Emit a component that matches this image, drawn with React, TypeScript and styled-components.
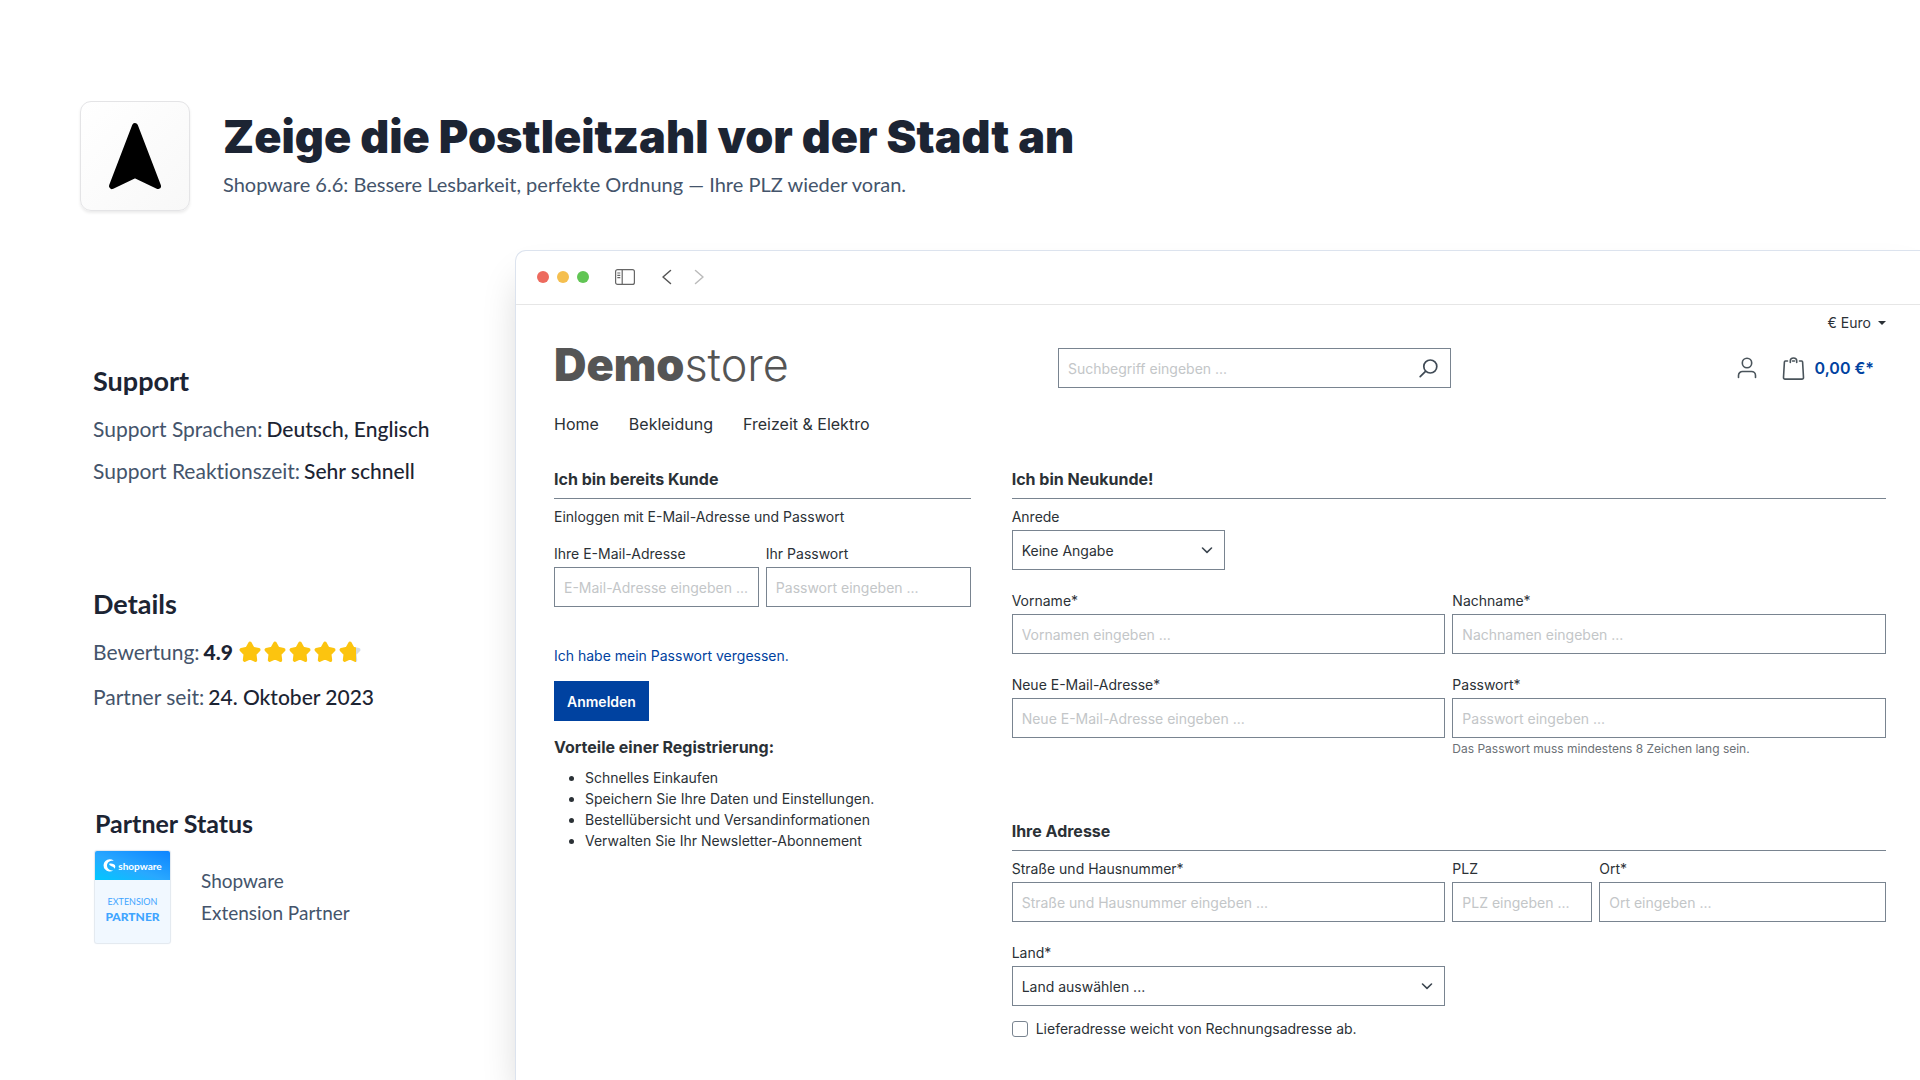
import React, { useId } from "react";
import styled, { createGlobalStyle } from "styled-components";

const ink = "#1c2433";
const slate = "#44546b";
const text = "#2b3136";
const line = "#798490";
const primary = "#0042a0";
const brandFont = `Lato, "Open Sans", sans-serif`;
const shopFont = `Inter, "Liberation Sans", sans-serif`;

const GlobalStyle = createGlobalStyle`
  *, *::before, *::after { box-sizing: border-box; }
  body { margin: 0; background: #fff; color: ${text}; font-family: ${shopFont}; }
  h1, h2, h3, p, ul, dl, dd { margin: 0; padding: 0; }
  button, input, select { font: inherit; color: inherit; }
  svg { display: block; }
`;

const Page = styled.div`
  display: flex;
  flex-direction: column;
  min-height: 100vh;
  overflow: hidden;
`;

const Hero = styled.header`
  display: flex;
  align-items: center;
  gap: 33px;
  padding: 101px 80px 39px;
`;

const AppIcon = styled.div`
  display: grid;
  place-items: center;
  flex: none;
  width: 110px;
  height: 110px;
  border: 1px solid #e4e4e6;
  border-radius: 11px;
  background: linear-gradient(135deg, #fff, #f8f8f8);
  box-shadow: 0 2px 3px rgba(0, 0, 0, 0.08);
`;

const HeroText = styled.div`
  display: grid;
  gap: 4px;
  padding-bottom: 4px;
`;

const Title = styled.h1`
  color: ${ink};
  font: 900 45px/56px ${shopFont};
`;

const Subtitle = styled.p`
  color: ${slate};
  font: 400 20px/30px ${brandFont};
`;

const Main = styled.main`
  display: flex;
  flex: 1;
`;

const Sidebar = styled.aside`
  flex: none;
  width: 515px;
  padding: 113px 24px 0 93px;
  font-family: ${brandFont};
  font-variant-ligatures: none;
  color: ${slate};
`;

const SideSection = styled.section<{ $space: number }>`
  margin-bottom: ${(p) => p.$space}px;
`;

const SideTitle = styled.h2`
  color: ${ink};
  font-size: 27px;
  line-height: 36px;
  font-weight: 700;
`;

const Facts = styled.dl<{ $gap: number }>`
  display: grid;
  gap: ${(p) => p.$gap}px;
  margin-top: 15px;
  font-size: 21px;
  line-height: 30px;
`;

const Fact = styled.div`
  display: flex;
  align-items: center;
  gap: 4px;
`;

const FactValue = styled.dd`
  display: flex;
  align-items: center;
  gap: 5px;
  color: ${ink};
  font-weight: 500;
`;

const Score = styled.strong`
  font-weight: 900;
`;

const Stars = styled.span`
  display: flex;
  gap: 1px;
`;

const PartnerTitle = styled(SideTitle)`
  font-size: 25px;
`;

const PartnerSection = styled.section`
  padding-left: 2px;
`;

const PartnerRow = styled.div`
  display: flex;
  align-items: center;
  gap: 31px;
  margin-top: 10px;
  font-size: 19px;
  line-height: 32px;
`;

const Badge = styled.div`
  flex: none;
  width: 75px;
  height: 92px;
  border-radius: 2px;
  overflow: hidden;
  background: #f1f8ff;
  box-shadow: 0 0 1px 1px #e2e8ef;
  color: #3fa5ff;
  text-align: center;
`;

const BadgeTop = styled.div`
  display: flex;
  align-items: center;
  justify-content: center;
  gap: 2px;
  height: 29px;
  background: linear-gradient(20deg, #00c8ff 0%, #29a8ff 45%, #0d84ff 100%);
  color: #fff;
  font-size: 10px;
  line-height: 12px;
  font-weight: 700;
`;

const BadgeKind = styled.div`
  margin-top: 15px;
  font-size: 9px;
  line-height: 14px;
`;

const BadgeRole = styled.div`
  font-size: 12px;
  line-height: 15px;
  font-weight: 900;
`;

const BrowserWindow = styled.section`
  flex: 1;
  min-width: 0;
  border: solid #dce3ee;
  border-width: 1px 0 0 1px;
  border-radius: 11px 0 0 0;
  background: #fff;
  box-shadow: 0 24px 40px -8px rgba(0, 0, 0, 0.2);
`;

const Toolbar = styled.div`
  display: flex;
  align-items: center;
  height: 54px;
  padding: 0 0 2px 21px;
  border-bottom: 1px solid #e6e6e6;
`;

const Lights = styled.div`
  display: flex;
  gap: 8px;
  margin-right: 26px;
`;

const Light = styled.span<{ $color: string }>`
  width: 12px;
  height: 12px;
  border-radius: 50%;
  background: ${(p) => p.$color};
`;

const IconButton = styled.button`
  display: grid;
  place-items: center;
  padding: 0;
  border: 0;
  background: none;
`;

const ToolbarArrows = styled.div`
  display: flex;
  gap: 13px;
  margin-left: 21px;
`;

const Store = styled.div`
  padding: 7px 34px 40px 38px;
  font-size: 14px;
  line-height: 21px;
`;

const TopBar = styled.div`
  display: flex;
  justify-content: flex-end;
`;

const Currency = styled.button`
  display: flex;
  align-items: center;
  gap: 7px;
  padding: 0;
  border: 0;
  background: none;
  line-height: 21px;
`;

const StoreHeader = styled.div`
  display: grid;
  grid-template-columns: 504fr 393fr 435fr;
  align-items: center;
  margin-top: 15px;
`;

const Logo = styled.a`
  height: 40px;
  color: #555;
  font-size: 45px;
  line-height: 34px;
  font-weight: 300;
  text-decoration: none;
`;

const LogoStrong = styled.span`
  font-weight: 900;
`;

const Search = styled.form`
  display: flex;
  height: 40px;
  padding-right: 12px;
  border: 1px solid ${line};
`;

const SearchInput = styled.input`
  flex: 1;
  min-width: 0;
  padding: 0 9px;
  border: 0;
  outline: 0;
  background: none;
  &::placeholder { color: #c3c6c8; opacity: 1; }
`;

const Actions = styled.div`
  display: flex;
  align-items: center;
  justify-content: flex-end;
  padding-right: 12px;
`;

const Cart = styled.a`
  display: flex;
  align-items: center;
  gap: 10px;
  margin-left: 25px;
  color: ${primary};
  font-size: 16px;
  font-weight: 600;
  text-decoration: none;
`;

const Nav = styled.nav`
  display: flex;
  gap: 30px;
  margin-top: 24px;
  font-size: 16px;
  line-height: 24px;
`;

const NavLink = styled.a`
  color: inherit;
  text-decoration: none;
`;

const Columns = styled.div`
  display: grid;
  grid-template-columns: repeat(12, minmax(0, 1fr));
  column-gap: 41px;
  margin-top: 31px;
`;

const Column = styled.form<{ $span: number }>`
  grid-column: span ${(p) => p.$span};
`;

const CardTitle = styled.h2`
  margin-bottom: 7px;
  padding-bottom: 7px;
  border-bottom: 1px solid ${line};
  font-size: 16px;
  line-height: 24px;
  font-weight: 700;
`;

const Fields = styled.div<{ $top?: number }>`
  display: grid;
  grid-template-columns: repeat(12, minmax(0, 1fr));
  gap: 20px 7px;
  margin-top: ${(p) => p.$top ?? 0}px;
`;

const FieldBox = styled.div<{ $span: number }>`
  grid-column: span ${(p) => p.$span};
`;

const RowBreak = styled.div<{ $span: number }>`
  grid-column: span ${(p) => p.$span};
`;

const Label = styled.label`
  display: block;
  margin-bottom: 3px;
`;

const Input = styled.input`
  display: block;
  width: 100%;
  height: 40px;
  padding: 0 9px;
  border: 1px solid ${line};
  border-radius: 0;
  background: #fff;
  &::placeholder { color: #c3c6c8; opacity: 1; }
`;

const SelectWrap = styled.div`
  position: relative;
  svg {
    position: absolute;
    right: 12px;
    top: 15px;
    pointer-events: none;
  }
`;

const Select = styled.select`
  display: block;
  width: 100%;
  height: 40px;
  padding: 0 9px;
  border: 1px solid ${line};
  border-radius: 0;
  background: #fff;
  appearance: none;
`;

const Hint = styled.small`
  display: block;
  margin-top: 3px;
  color: #6c7176;
  font-size: 12px;
  line-height: 16px;
`;

const ForgotLink = styled.a`
  display: block;
  margin: 38px 0 15px;
  color: ${primary};
  text-decoration: none;
`;

const Submit = styled.button`
  height: 40px;
  padding: 0 12px;
  border: 1px solid ${primary};
  background: ${primary};
  color: #fff;
  font-weight: 600;
`;

const BenefitsTitle = styled.h3`
  margin: 14px 0 8px;
  font-size: 16px;
  line-height: 24px;
  font-weight: 700;
`;

const Benefits = styled.ul`
  padding-left: 31px;
`;

const AddressBlock = styled.div`
  margin-top: 62px;
`;

const CheckRow = styled.div`
  display: flex;
  align-items: center;
  gap: 8px;
  margin-top: 12px;
`;

const Checkbox = styled.input`
  width: 16px;
  height: 16px;
  margin: 0;
  border: 1px solid ${line};
  border-radius: 3px;
  background: #fff;
  appearance: none;
`;

function Field({ label, placeholder, span, type = "text", hint }: {
  label: string; placeholder: string; span: number; type?: string; hint?: string;
}) {
  const id = useId();
  return (
    <FieldBox $span={span}>
      <Label htmlFor={id}>{label}</Label>
      <Input id={id} type={type} placeholder={placeholder} />
      {hint && <Hint>{hint}</Hint>}
    </FieldBox>
  );
}

function SelectField({ label, value, span }: { label: string; value: string; span: number }) {
  const id = useId();
  return (
    <FieldBox $span={span}>
      <Label htmlFor={id}>{label}</Label>
      <SelectWrap>
        <Select id={id}><option>{value}</option></Select>
        <svg width="12" height="10" viewBox="0 0 12 10" fill="none" stroke="#3c4650" strokeWidth="1.6" strokeLinecap="round" strokeLinejoin="round">
          <path d="M1.5 3 6 7.3 10.5 3" />
        </svg>
      </SelectWrap>
    </FieldBox>
  );
}

const starPoints = "12,3.4 14.9,8.6 20.7,9.8 16.7,14.1 17.4,20.1 12,17.6 6.6,20.1 7.3,14.1 3.3,9.8 9.1,8.6";

function Star({ fill = 1 }: { fill?: number }) {
  const id = useId();
  return (
    <svg width="24" height="24" viewBox="0 0 24 24" aria-hidden="true">
      <defs>
        <linearGradient id={id} gradientUnits="userSpaceOnUse" x1="0" x2="24" y1="0" y2="0">
          <stop offset={fill} stopColor="#fcc40f" />
          <stop offset={fill} stopColor="#d3dbe7" />
        </linearGradient>
      </defs>
      <polygon points={starPoints} fill={`url(#${id})`} stroke={`url(#${id})`} strokeWidth="3.6" strokeLinejoin="round" />
    </svg>
  );
}

const benefits = [
  "Schnelles Einkaufen",
  "Speichern Sie Ihre Daten und Einstellungen.",
  "Bestellübersicht und Versandinformationen",
  "Verwalten Sie Ihr Newsletter-Abonnement",
];

export default function App() {
  return (
    <>
      <GlobalStyle />
      <Page>
        <Hero>
          <AppIcon>
            <svg width="54" height="70" viewBox="0 0 54 70" aria-hidden="true">
              <path d="M27 5 50 65 27 54 4 65Z" fill="#000" stroke="#000" strokeWidth="6" strokeLinejoin="round" />
            </svg>
          </AppIcon>
          <HeroText>
            <Title>Zeige die Postleitzahl vor der Stadt an</Title>
            <Subtitle>Shopware 6.6: Bessere Lesbarkeit, perfekte Ordnung — Ihre PLZ wieder voran.</Subtitle>
          </HeroText>
        </Hero>
        <Main>
          <Sidebar>
            <SideSection $space={100}>
              <SideTitle>Support</SideTitle>
              <Facts $gap={12}>
                <Fact><dt>Support Sprachen:</dt><FactValue>Deutsch, Englisch</FactValue></Fact>
                <Fact><dt>Support Reaktionszeit:</dt><FactValue>Sehr schnell</FactValue></Fact>
              </Facts>
            </SideSection>
            <SideSection $space={93}>
              <SideTitle>Details</SideTitle>
              <Facts $gap={15}>
                <Fact>
                  <dt>Bewertung:</dt>
                  <FactValue>
                    <Score>4.9</Score>
                    <Stars role="img" aria-label="4.9 von 5">
                      <Star /><Star /><Star /><Star /><Star fill={0.76} />
                    </Stars>
                  </FactValue>
                </Fact>
                <Fact><dt>Partner seit:</dt><FactValue>24. Oktober 2023</FactValue></Fact>
              </Facts>
            </SideSection>
            <PartnerSection>
              <PartnerTitle>Partner Status</PartnerTitle>
              <PartnerRow>
                <Badge>
                  <BadgeTop>
                    <svg width="13" height="13" viewBox="0 0 13 13" fill="#fff" aria-hidden="true">
                      <path d="M10.8 1.7A6.2 6.2 0 1 0 10.3 11.5C8 11.7 4.2 10.3 4 6.7 3.9 3.4 7 1.2 10.8 1.7Z" />
                      <path d="M6.5 4.6c2.7-.5 5.6.6 5.8 2.6.1 1.2-.5 2-1.2 2.6.2-2-2.5-2.2-4-3.2-.9-.6-1.2-1.5-.6-2Z" />
                    </svg>
                    shopware
                  </BadgeTop>
                  <BadgeKind>EXTENSION</BadgeKind>
                  <BadgeRole>PARTNER</BadgeRole>
                </Badge>
                <div>
                  <p>Shopware</p>
                  <p>Extension Partner</p>
                </div>
              </PartnerRow>
            </PartnerSection>
          </Sidebar>
          <BrowserWindow>
            <Toolbar>
              <Lights>
                <Light $color="#ed6a5e" />
                <Light $color="#f5bf4f" />
                <Light $color="#61c554" />
              </Lights>
              <IconButton type="button" aria-label="Seitenleiste">
                <svg width="20" height="16" viewBox="0 0 20 16" fill="none" stroke="#666" strokeWidth="1.2">
                  <rect x=".6" y=".6" width="18.8" height="14.8" rx="2" />
                  <path d="M7.2.6v14.8M2.3 4h3M2.3 6.3h3M2.3 8.6h3" />
                </svg>
              </IconButton>
              <ToolbarArrows>
                <IconButton type="button" aria-label="Zurück">
                  <svg width="20" height="16" viewBox="0 0 20 16" fill="none" stroke="#555" strokeWidth="1.5" strokeLinecap="round" strokeLinejoin="round">
                    <path d="M14.5 1.5 7 8l7.5 6.5" />
                  </svg>
                </IconButton>
                <IconButton type="button" aria-label="Vor">
                  <svg width="20" height="16" viewBox="0 0 20 16" fill="none" stroke="#bbb" strokeWidth="1.5" strokeLinecap="round" strokeLinejoin="round">
                    <path d="M6.5 1.5 14 8l-7.5 6.5" />
                  </svg>
                </IconButton>
              </ToolbarArrows>
            </Toolbar>
            <Store>
              <TopBar>
                <Currency type="button">
                  € Euro
                  <svg width="8" height="4" viewBox="0 0 8 4" aria-hidden="true"><path d="M0 0h8L4 4z" fill={text} /></svg>
                </Currency>
              </TopBar>
              <StoreHeader>
                <Logo href="#" aria-label="Demostore"><LogoStrong>Demo</LogoStrong>store</Logo>
                <Search role="search">
                  <SearchInput type="search" aria-label="Suche" placeholder="Suchbegriff eingeben ..." />
                  <IconButton type="button" aria-label="Suchen">
                    <svg width="19" height="19" viewBox="0 0 19 19" fill="none" stroke="#3f4a55" strokeWidth="1.7" strokeLinecap="round">
                      <circle cx="11.3" cy="7.5" r="6.5" />
                      <path d="M6.5 12.3 1.2 17.6" />
                    </svg>
                  </IconButton>
                </Search>
                <Actions>
                  <IconButton type="button" aria-label="Mein Konto">
                    <svg width="20" height="22" viewBox="0 0 20 22" fill="none" stroke="#4a545b" strokeWidth="1.6" strokeLinecap="round">
                      <circle cx="10" cy="6" r="4.7" />
                      <path d="M1.5 20.5V18.5a4 4 0 0 1 4-4h9a4 4 0 0 1 4 4v2" />
                    </svg>
                  </IconButton>
                  <Cart href="#">
                    <svg width="23" height="23" viewBox="0 0 23 23" fill="none" stroke="#4a545b" strokeWidth="1.6" strokeLinecap="round" strokeLinejoin="round" aria-hidden="true">
                      <path d="M5.5 4H3.4a1 1 0 0 0-1 1L1.5 20.5a1.5 1.5 0 0 0 1.5 1.6h17a1.5 1.5 0 0 0 1.5-1.6L20.6 5a1 1 0 0 0-1-1H17.5M10.5 4h2" />
                      <path d="M8.3 5.5V3.8a3.2 2.8 0 0 1 6.4 0v1.7" />
                    </svg>
                    0,00 €*
                  </Cart>
                </Actions>
              </StoreHeader>
              <Nav>
                <NavLink href="#">Home</NavLink>
                <NavLink href="#">Bekleidung</NavLink>
                <NavLink href="#">Freizeit &amp; Elektro</NavLink>
              </Nav>
              <Columns>
                <Column $span={4}>
                  <CardTitle>Ich bin bereits Kunde</CardTitle>
                  <p>Einloggen mit E-Mail-Adresse und Passwort</p>
                  <Fields $top={16}>
                    <Field span={6} label="Ihre E-Mail-Adresse" placeholder="E-Mail-Adresse eingeben ..." type="email" />
                    <Field span={6} label="Ihr Passwort" placeholder="Passwort eingeben ..." type="password" />
                  </Fields>
                  <ForgotLink href="#">Ich habe mein Passwort vergessen.</ForgotLink>
                  <Submit type="button">Anmelden</Submit>
                  <BenefitsTitle>Vorteile einer Registrierung:</BenefitsTitle>
                  <Benefits>
                    {benefits.map((b) => <li key={b}>{b}</li>)}
                  </Benefits>
                </Column>
                <Column $span={8}>
                  <CardTitle>Ich bin Neukunde!</CardTitle>
                  <Fields>
                    <SelectField span={3} label="Anrede" value="Keine Angabe" />
                    <RowBreak $span={9} />
                    <Field span={6} label="Vorname*" placeholder="Vornamen eingeben ..." />
                    <Field span={6} label="Nachname*" placeholder="Nachnamen eingeben ..." />
                    <Field span={6} label="Neue E-Mail-Adresse*" placeholder="Neue E-Mail-Adresse eingeben ..." type="email" />
                    <Field span={6} label="Passwort*" placeholder="Passwort eingeben ..." type="password" hint="Das Passwort muss mindestens 8 Zeichen lang sein." />
                  </Fields>
                  <AddressBlock>
                    <CardTitle>Ihre Adresse</CardTitle>
                    <Fields>
                      <Field span={6} label="Straße und Hausnummer*" placeholder="Straße und Hausnummer eingeben ..." />
                      <Field span={2} label="PLZ" placeholder="PLZ eingeben ..." />
                      <Field span={4} label="Ort*" placeholder="Ort eingeben ..." />
                      <SelectField span={6} label="Land*" value="Land auswählen ..." />
                    </Fields>
                    <CheckRow>
                      <Checkbox id="other-address" type="checkbox" />
                      <label htmlFor="other-address">Lieferadresse weicht von Rechnungsadresse ab.</label>
                    </CheckRow>
                  </AddressBlock>
                </Column>
              </Columns>
            </Store>
          </BrowserWindow>
        </Main>
      </Page>
    </>
  );
}
